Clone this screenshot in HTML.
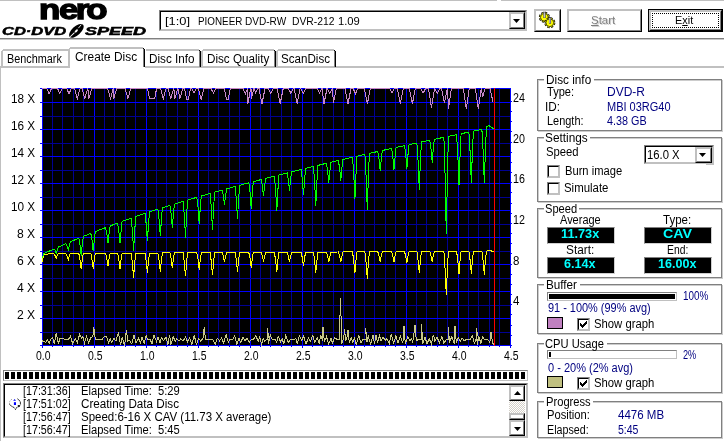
<!DOCTYPE html>
<html lang="en">
<head>
<meta charset="utf-8">
<title>Nero CD-DVD Speed</title>
<style>
html,body{margin:0;padding:0;background:#fff;}
body{width:724px;height:441px;overflow:hidden;font-family:"Liberation Sans",sans-serif;font-size:12px;color:#000;}
#app{position:relative;width:724px;height:441px;background:#fff;overflow:hidden;}
#app div,#app span,#app svg{position:absolute;box-sizing:border-box;}
.t{white-space:pre;transform-origin:0 0;}
.t u{text-decoration:underline;text-decoration-thickness:1px;text-underline-offset:1px;}
.hl{background:#c0c0c0;}
.sh{background:#808080;}
.bk{background:#000;}
.grp{border:1px solid #808080;}
.grph{border:1px solid #cccccc;}
.sunk{border:1px solid;border-color:#808080 #c0c0c0 #c0c0c0 #808080;background:#fff;}
.sunk2{border:1px solid;border-color:#808080 #c0c0c0 #c0c0c0 #808080;background:#fff;}
.sunk2>i{position:absolute;left:0;top:0;right:0;bottom:0;border:1px solid;border-color:#000 #c0c0c0 #c0c0c0 #000;}
.btn{border:1px solid;border-color:#c0c0c0 #000 #000 #c0c0c0;background:#fff;}
.btn>i{position:absolute;left:0;top:0;right:0;bottom:0;border:1px solid;border-color:#c0c0c0 #808080 #808080 #c0c0c0;}
.lcd{background:#000;border:1px solid;border-color:#808080 #d0d0d0 #d0d0d0 #808080;}
.chk{width:13px;height:13px;border:1px solid;border-color:#808080 #c0c0c0 #c0c0c0 #808080;background:#fff;}
.chk>i{position:absolute;left:0;top:0;right:0;bottom:0;border:1px solid;border-color:#000 #c0c0c0 #c0c0c0 #000;}
.sw{border:1px solid #000;}
.dis{text-shadow:1px 1px 0 #d4d4d4;}

</style>
</head>
<body>
<div id="app">
<div style="left:0px;top:0px;width:497px;height:1px;background:#c0c0c0;"></div>
<div style="left:501px;top:0px;width:223px;height:1px;background:#c0c0c0;"></div>
<div style="left:0px;top:38px;width:724px;height:1px;background:#808080;"></div>
<div style="left:0px;top:39px;width:724px;height:1px;background:#c8c8c8;"></div>
<svg style="left:66px;top:22px" width="20" height="17" viewBox="66 22 20 17"><g transform="translate(76.4 30.8) rotate(-42.5)"><ellipse cx="0" cy="0" rx="9" ry="4.4" fill="#000"/><ellipse cx="-0.2" cy="0" rx="2" ry="1" fill="#fff"/><path d="M-8.6 0.2 L-2.6 0" stroke="#fff" stroke-width="1"/><path d="M3.2 -0.6 L7.6 -1.2" stroke="#e8e8e8" stroke-width="0.9"/></g></svg>
<div class="sunk2" style="left:159px;top:10px;width:368px;height:21px;"><i></i></div>
<div class="btn" style="left:509px;top:12px;width:16px;height:17px;"><i></i></div>
<svg style="left:513px;top:19px" width="7" height="4" viewBox="0 0 7 4"><polygon points="0,0 7,0 3.5,4" fill="#000"/></svg>
<div class="btn" style="left:534px;top:9px;width:27px;height:23px;"><i></i></div>
<svg style="left:536px;top:10px" width="24" height="20" viewBox="536 10 24 20"><circle cx="544.4" cy="17.3" r="4.7" fill="none" stroke="#000" stroke-width="1.7" stroke-dasharray="2.3 1.39"/><circle cx="544.4" cy="17.3" r="3.9" fill="#ffff00" stroke="#303000" stroke-width="0.9"/><circle cx="544.4" cy="17.3" r="4.5" fill="none" stroke="#ffff00" stroke-width="0.9" stroke-dasharray="1.1 2.43" stroke-dashoffset="-0.6"/><circle cx="549.8" cy="22.7" r="4.7" fill="none" stroke="#000" stroke-width="1.7" stroke-dasharray="2.3 1.39"/><circle cx="549.8" cy="22.7" r="3.9" fill="#ffff00" stroke="#303000" stroke-width="0.9"/><circle cx="549.8" cy="22.7" r="4.5" fill="none" stroke="#ffff00" stroke-width="0.9" stroke-dasharray="1.1 2.43" stroke-dashoffset="-0.6"/><rect x="543.4" y="11.8" width="2.2" height="6.2" fill="#303030"/><rect x="543.85" y="12.4" width="1.3" height="5.2" fill="#a8a8b8"/><rect x="543.85" y="12.4" width="0.5" height="5.2" fill="#e8e8e8"/><rect x="548.9" y="17.4" width="2.2" height="6.2" fill="#303030"/><rect x="549.35" y="18.0" width="1.3" height="5.2" fill="#a8a8b8"/><rect x="549.35" y="18.0" width="0.5" height="5.2" fill="#e8e8e8"/></svg>
<div class="btn" style="left:567px;top:9px;width:75px;height:23px;"><i></i></div>
<div style="left:648px;top:9px;width:75px;height:23px;border:1px solid #000;background:#fff;"></div>
<div class="btn" style="left:649px;top:10px;width:73px;height:21px;border-color:#c0c0c0 #000 #000 #c0c0c0;"><i></i></div>
<div style="left:652px;top:13px;width:67px;height:15px;border:1px dotted #000;"></div>
<div class="hl" style="left:0px;top:66px;width:724px;height:2px;"></div>
<div class="hl" style="left:0px;top:66px;width:1px;height:375px;"></div>
<div class="hl" style="left:1px;top:51px;width:2px;height:15px;"></div><div class="hl" style="left:2px;top:50px;width:1px;height:1px;"></div><div class="hl" style="left:3px;top:49px;width:65px;height:2px;"></div><div class="bk" style="left:69px;top:51px;width:1px;height:16px;"></div><div class="sh" style="left:68px;top:51px;width:1px;height:16px;"></div><div class="bk" style="left:68px;top:50px;width:1px;height:1px;"></div>
<div class="hl" style="left:146px;top:49px;width:53px;height:2px;"></div><div class="bk" style="left:200px;top:51px;width:1px;height:16px;"></div><div class="sh" style="left:199px;top:51px;width:1px;height:16px;"></div><div class="bk" style="left:199px;top:50px;width:1px;height:1px;"></div>
<div class="hl" style="left:201px;top:51px;width:2px;height:15px;"></div><div class="hl" style="left:202px;top:50px;width:1px;height:1px;"></div><div class="hl" style="left:203px;top:49px;width:71px;height:2px;"></div><div class="bk" style="left:275px;top:51px;width:1px;height:16px;"></div><div class="sh" style="left:274px;top:51px;width:1px;height:16px;"></div><div class="bk" style="left:274px;top:50px;width:1px;height:1px;"></div>
<div class="hl" style="left:276px;top:51px;width:2px;height:15px;"></div><div class="hl" style="left:277px;top:50px;width:1px;height:1px;"></div><div class="hl" style="left:278px;top:49px;width:56px;height:2px;"></div><div class="bk" style="left:335px;top:51px;width:1px;height:16px;"></div><div class="sh" style="left:334px;top:51px;width:1px;height:16px;"></div><div class="bk" style="left:334px;top:50px;width:1px;height:1px;"></div>
<div style="left:68px;top:47px;width:77px;height:21px;background:#fff;"></div><div class="hl" style="left:68px;top:49px;width:2px;height:19px;"></div><div class="hl" style="left:69px;top:48px;width:1px;height:1px;"></div><div class="hl" style="left:70px;top:47px;width:73px;height:2px;"></div><div class="bk" style="left:144px;top:49px;width:1px;height:18px;"></div><div class="sh" style="left:143px;top:49px;width:1px;height:18px;"></div><div class="bk" style="left:143px;top:48px;width:1px;height:1px;"></div>
<div class="grph" style="left:538px;top:80px;width:185px;height:52px;"></div><div class="grp" style="left:537px;top:79px;width:185px;height:52px;"></div><div style="left:544px;top:77px;width:50px;height:5px;background:#fff;"></div>
<div class="grph" style="left:538px;top:138px;width:185px;height:65px;"></div><div class="grp" style="left:537px;top:137px;width:185px;height:65px;"></div><div style="left:544px;top:135px;width:46px;height:5px;background:#fff;"></div>
<div class="grph" style="left:538px;top:209px;width:185px;height:70px;"></div><div class="grp" style="left:537px;top:208px;width:185px;height:70px;"></div><div style="left:544px;top:206px;width:35px;height:5px;background:#fff;"></div>
<div class="grph" style="left:538px;top:285px;width:185px;height:50px;"></div><div class="grp" style="left:537px;top:284px;width:185px;height:50px;"></div><div style="left:544px;top:282px;width:36px;height:5px;background:#fff;"></div>
<div class="grph" style="left:538px;top:344px;width:185px;height:50px;"></div><div class="grp" style="left:537px;top:343px;width:185px;height:50px;"></div><div style="left:544px;top:341px;width:63px;height:5px;background:#fff;"></div>
<div class="grph" style="left:538px;top:402px;width:185px;height:37px;"></div><div class="grp" style="left:537px;top:401px;width:185px;height:37px;"></div><div style="left:544px;top:399px;width:49px;height:5px;background:#fff;"></div>
<div class="sunk2" style="left:644px;top:145px;width:70px;height:19px;"><i></i></div>
<div class="hl" style="left:706px;top:163px;width:8px;height:2px;"></div>
<div class="btn" style="left:695px;top:147px;width:17px;height:16px;"><i></i></div>
<svg style="left:699px;top:153px" width="7" height="4" viewBox="0 0 7 4"><polygon points="0,0 7,0 3.5,4" fill="#000"/></svg>
<div class="chk" style="left:547px;top:165px;width:13px;height:13px;"><i></i></div>
<div class="chk" style="left:547px;top:182px;width:13px;height:13px;"><i></i></div>
<div class="lcd" style="left:547px;top:227px;width:68px;height:17px;"></div>
<div class="lcd" style="left:644px;top:227px;width:68px;height:17px;"></div>
<div class="lcd" style="left:547px;top:257px;width:68px;height:17px;"></div>
<div class="lcd" style="left:644px;top:257px;width:68px;height:17px;"></div>
<div class="sunk" style="left:547px;top:292px;width:130px;height:9px;"><div class="bk" style="left:1px;top:1px;width:126px;height:5px;"></div></div>
<div class="sw" style="left:547px;top:317px;width:16px;height:12px;background:#c080c0;"></div>
<div class="chk" style="left:577px;top:318px;width:13px;height:13px;"><i></i></div>
<svg style="left:577px;top:318px" width="13" height="13" viewBox="0 0 13 13" shape-rendering="crispEdges" fill="#000"><rect x="9" y="3" width="1" height="1"/><rect x="8" y="4" width="2" height="1"/><rect x="3" y="5" width="1" height="1"/><rect x="7" y="5" width="3" height="1"/><rect x="3" y="6" width="2" height="1"/><rect x="6" y="6" width="3" height="1"/><rect x="3" y="7" width="5" height="1"/><rect x="4" y="8" width="3" height="1"/><rect x="5" y="9" width="1" height="1"/></svg>
<div class="sunk" style="left:547px;top:350px;width:130px;height:9px;"><div class="bk" style="left:1px;top:1px;width:2px;height:5px;"></div></div>
<div class="sw" style="left:547px;top:376px;width:16px;height:12px;background:#c0c080;"></div>
<div class="chk" style="left:577px;top:377px;width:13px;height:13px;"><i></i></div>
<svg style="left:577px;top:377px" width="13" height="13" viewBox="0 0 13 13" shape-rendering="crispEdges" fill="#000"><rect x="9" y="3" width="1" height="1"/><rect x="8" y="4" width="2" height="1"/><rect x="3" y="5" width="1" height="1"/><rect x="7" y="5" width="3" height="1"/><rect x="3" y="6" width="2" height="1"/><rect x="6" y="6" width="3" height="1"/><rect x="3" y="7" width="5" height="1"/><rect x="4" y="8" width="3" height="1"/><rect x="5" y="9" width="1" height="1"/></svg>
<div class="sunk" style="left:3px;top:370px;width:525px;height:11px;overflow:hidden;"><div class="bk" style="left:1px;top:1px;width:4px;height:7px;"></div><div class="bk" style="left:7px;top:1px;width:4px;height:7px;"></div><div class="bk" style="left:13px;top:1px;width:4px;height:7px;"></div><div class="bk" style="left:19px;top:1px;width:4px;height:7px;"></div><div class="bk" style="left:25px;top:1px;width:4px;height:7px;"></div><div class="bk" style="left:31px;top:1px;width:4px;height:7px;"></div><div class="bk" style="left:37px;top:1px;width:4px;height:7px;"></div><div class="bk" style="left:43px;top:1px;width:4px;height:7px;"></div><div class="bk" style="left:49px;top:1px;width:4px;height:7px;"></div><div class="bk" style="left:55px;top:1px;width:4px;height:7px;"></div><div class="bk" style="left:61px;top:1px;width:4px;height:7px;"></div><div class="bk" style="left:67px;top:1px;width:4px;height:7px;"></div><div class="bk" style="left:73px;top:1px;width:4px;height:7px;"></div><div class="bk" style="left:79px;top:1px;width:4px;height:7px;"></div><div class="bk" style="left:85px;top:1px;width:4px;height:7px;"></div><div class="bk" style="left:91px;top:1px;width:4px;height:7px;"></div><div class="bk" style="left:97px;top:1px;width:4px;height:7px;"></div><div class="bk" style="left:103px;top:1px;width:4px;height:7px;"></div><div class="bk" style="left:109px;top:1px;width:4px;height:7px;"></div><div class="bk" style="left:115px;top:1px;width:4px;height:7px;"></div><div class="bk" style="left:121px;top:1px;width:4px;height:7px;"></div><div class="bk" style="left:127px;top:1px;width:4px;height:7px;"></div><div class="bk" style="left:133px;top:1px;width:4px;height:7px;"></div><div class="bk" style="left:139px;top:1px;width:4px;height:7px;"></div><div class="bk" style="left:145px;top:1px;width:4px;height:7px;"></div><div class="bk" style="left:151px;top:1px;width:4px;height:7px;"></div><div class="bk" style="left:157px;top:1px;width:4px;height:7px;"></div><div class="bk" style="left:163px;top:1px;width:4px;height:7px;"></div><div class="bk" style="left:169px;top:1px;width:4px;height:7px;"></div><div class="bk" style="left:175px;top:1px;width:4px;height:7px;"></div><div class="bk" style="left:181px;top:1px;width:4px;height:7px;"></div><div class="bk" style="left:187px;top:1px;width:4px;height:7px;"></div><div class="bk" style="left:193px;top:1px;width:4px;height:7px;"></div><div class="bk" style="left:199px;top:1px;width:4px;height:7px;"></div><div class="bk" style="left:205px;top:1px;width:4px;height:7px;"></div><div class="bk" style="left:211px;top:1px;width:4px;height:7px;"></div><div class="bk" style="left:217px;top:1px;width:4px;height:7px;"></div><div class="bk" style="left:223px;top:1px;width:4px;height:7px;"></div><div class="bk" style="left:229px;top:1px;width:4px;height:7px;"></div><div class="bk" style="left:235px;top:1px;width:4px;height:7px;"></div><div class="bk" style="left:241px;top:1px;width:4px;height:7px;"></div><div class="bk" style="left:247px;top:1px;width:4px;height:7px;"></div><div class="bk" style="left:253px;top:1px;width:4px;height:7px;"></div><div class="bk" style="left:259px;top:1px;width:4px;height:7px;"></div><div class="bk" style="left:265px;top:1px;width:4px;height:7px;"></div><div class="bk" style="left:271px;top:1px;width:4px;height:7px;"></div><div class="bk" style="left:277px;top:1px;width:4px;height:7px;"></div><div class="bk" style="left:283px;top:1px;width:4px;height:7px;"></div><div class="bk" style="left:289px;top:1px;width:4px;height:7px;"></div><div class="bk" style="left:295px;top:1px;width:4px;height:7px;"></div><div class="bk" style="left:301px;top:1px;width:4px;height:7px;"></div><div class="bk" style="left:307px;top:1px;width:4px;height:7px;"></div><div class="bk" style="left:313px;top:1px;width:4px;height:7px;"></div><div class="bk" style="left:319px;top:1px;width:4px;height:7px;"></div><div class="bk" style="left:325px;top:1px;width:4px;height:7px;"></div><div class="bk" style="left:331px;top:1px;width:4px;height:7px;"></div><div class="bk" style="left:337px;top:1px;width:4px;height:7px;"></div><div class="bk" style="left:343px;top:1px;width:4px;height:7px;"></div><div class="bk" style="left:349px;top:1px;width:4px;height:7px;"></div><div class="bk" style="left:355px;top:1px;width:4px;height:7px;"></div><div class="bk" style="left:361px;top:1px;width:4px;height:7px;"></div><div class="bk" style="left:367px;top:1px;width:4px;height:7px;"></div><div class="bk" style="left:373px;top:1px;width:4px;height:7px;"></div><div class="bk" style="left:379px;top:1px;width:4px;height:7px;"></div><div class="bk" style="left:385px;top:1px;width:4px;height:7px;"></div><div class="bk" style="left:391px;top:1px;width:4px;height:7px;"></div><div class="bk" style="left:397px;top:1px;width:4px;height:7px;"></div><div class="bk" style="left:403px;top:1px;width:4px;height:7px;"></div><div class="bk" style="left:409px;top:1px;width:4px;height:7px;"></div><div class="bk" style="left:415px;top:1px;width:4px;height:7px;"></div><div class="bk" style="left:421px;top:1px;width:4px;height:7px;"></div><div class="bk" style="left:427px;top:1px;width:4px;height:7px;"></div><div class="bk" style="left:433px;top:1px;width:4px;height:7px;"></div><div class="bk" style="left:439px;top:1px;width:4px;height:7px;"></div><div class="bk" style="left:445px;top:1px;width:4px;height:7px;"></div><div class="bk" style="left:451px;top:1px;width:4px;height:7px;"></div><div class="bk" style="left:457px;top:1px;width:4px;height:7px;"></div><div class="bk" style="left:463px;top:1px;width:4px;height:7px;"></div><div class="bk" style="left:469px;top:1px;width:4px;height:7px;"></div><div class="bk" style="left:475px;top:1px;width:4px;height:7px;"></div><div class="bk" style="left:481px;top:1px;width:4px;height:7px;"></div><div class="bk" style="left:487px;top:1px;width:4px;height:7px;"></div><div class="bk" style="left:493px;top:1px;width:4px;height:7px;"></div><div class="bk" style="left:499px;top:1px;width:4px;height:7px;"></div><div class="bk" style="left:505px;top:1px;width:4px;height:7px;"></div><div class="bk" style="left:511px;top:1px;width:4px;height:7px;"></div><div class="bk" style="left:517px;top:1px;width:4px;height:7px;"></div></div>
<div class="sunk2" style="left:3px;top:383px;width:525px;height:55px;"><i></i></div>
<div style="left:509px;top:385px;width:16px;height:51px;background-color:#fff;background-image:linear-gradient(45deg,#d4d0c8 25%,transparent 25%,transparent 75%,#d4d0c8 75%),linear-gradient(45deg,#d4d0c8 25%,transparent 25%,transparent 75%,#d4d0c8 75%);background-size:2px 2px;background-position:0 0,1px 1px;"></div>
<div class="btn" style="left:509px;top:385px;width:16px;height:16px;"><i></i></div>
<svg style="left:514px;top:391px" width="7" height="4" viewBox="0 0 7 4"><polygon points="0,4 7,4 3.5,0" fill="#000"/></svg>
<div class="btn" style="left:509px;top:413px;width:16px;height:7px;"><i></i></div>
<div class="btn" style="left:509px;top:420px;width:16px;height:16px;"><i></i></div>
<svg style="left:514px;top:427px" width="7" height="4" viewBox="0 0 7 4"><polygon points="0,0 7,0 3.5,4" fill="#000"/></svg>
<svg style="left:8px;top:397px" width="14" height="14" viewBox="8 397 14 14"><path d="M9.5 404.5 L12 406.5 L14 407.5 L15.5 409.6 L16.6 407.6 L18.5 406.8 L20.4 404.8 L20.4 402 L19.2 400.2 L17.2 398.6" fill="none" stroke="#000" stroke-width="1" stroke-dasharray="1.6 0.7"/><path d="M9.5 403.8 L9.6 401.6 L11 399.8 L12.8 398.7" fill="none" stroke="#909090" stroke-width="1" stroke-dasharray="1 1.2"/><path d="M17.8 405 L19.8 405 L19.8 407 L17.8 407 Z" fill="#202020"/><path d="M13.2 400.8 L14.6 399 L16 400.8 Z" fill="#0000ff"/><rect x="13.9" y="402.2" width="2.1" height="2.8" fill="#0000ff"/></svg>
<svg style="left:0;top:0" width="724" height="441" viewBox="0 0 724 441" shape-rendering="crispEdges">
<rect x="42" y="88" width="469" height="258" fill="#000"/>
<rect x="42" y="88" width="1" height="258" fill="#0000ff"/>
<rect x="42" y="346" width="1" height="2" fill="#0000ff"/>
<rect x="52" y="88" width="1" height="258" fill="#000094"/>
<rect x="52" y="346" width="1" height="1" fill="#0000ff"/>
<rect x="62" y="88" width="1" height="258" fill="#000094"/>
<rect x="62" y="346" width="1" height="1" fill="#0000ff"/>
<rect x="73" y="88" width="1" height="258" fill="#000094"/>
<rect x="73" y="346" width="1" height="1" fill="#0000ff"/>
<rect x="83" y="88" width="1" height="258" fill="#000094"/>
<rect x="83" y="346" width="1" height="1" fill="#0000ff"/>
<rect x="94" y="88" width="1" height="258" fill="#0000ff"/>
<rect x="94" y="346" width="1" height="2" fill="#0000ff"/>
<rect x="104" y="88" width="1" height="258" fill="#000094"/>
<rect x="104" y="346" width="1" height="1" fill="#0000ff"/>
<rect x="114" y="88" width="1" height="258" fill="#000094"/>
<rect x="114" y="346" width="1" height="1" fill="#0000ff"/>
<rect x="125" y="88" width="1" height="258" fill="#000094"/>
<rect x="125" y="346" width="1" height="1" fill="#0000ff"/>
<rect x="135" y="88" width="1" height="258" fill="#000094"/>
<rect x="135" y="346" width="1" height="1" fill="#0000ff"/>
<rect x="146" y="88" width="1" height="258" fill="#0000ff"/>
<rect x="146" y="346" width="1" height="2" fill="#0000ff"/>
<rect x="156" y="88" width="1" height="258" fill="#000094"/>
<rect x="156" y="346" width="1" height="1" fill="#0000ff"/>
<rect x="166" y="88" width="1" height="258" fill="#000094"/>
<rect x="166" y="346" width="1" height="1" fill="#0000ff"/>
<rect x="177" y="88" width="1" height="258" fill="#000094"/>
<rect x="177" y="346" width="1" height="1" fill="#0000ff"/>
<rect x="187" y="88" width="1" height="258" fill="#000094"/>
<rect x="187" y="346" width="1" height="1" fill="#0000ff"/>
<rect x="198" y="88" width="1" height="258" fill="#0000ff"/>
<rect x="198" y="346" width="1" height="2" fill="#0000ff"/>
<rect x="208" y="88" width="1" height="258" fill="#000094"/>
<rect x="208" y="346" width="1" height="1" fill="#0000ff"/>
<rect x="218" y="88" width="1" height="258" fill="#000094"/>
<rect x="218" y="346" width="1" height="1" fill="#0000ff"/>
<rect x="229" y="88" width="1" height="258" fill="#000094"/>
<rect x="229" y="346" width="1" height="1" fill="#0000ff"/>
<rect x="239" y="88" width="1" height="258" fill="#000094"/>
<rect x="239" y="346" width="1" height="1" fill="#0000ff"/>
<rect x="250" y="88" width="1" height="258" fill="#0000ff"/>
<rect x="250" y="346" width="1" height="2" fill="#0000ff"/>
<rect x="260" y="88" width="1" height="258" fill="#000094"/>
<rect x="260" y="346" width="1" height="1" fill="#0000ff"/>
<rect x="270" y="88" width="1" height="258" fill="#000094"/>
<rect x="270" y="346" width="1" height="1" fill="#0000ff"/>
<rect x="281" y="88" width="1" height="258" fill="#000094"/>
<rect x="281" y="346" width="1" height="1" fill="#0000ff"/>
<rect x="291" y="88" width="1" height="258" fill="#000094"/>
<rect x="291" y="346" width="1" height="1" fill="#0000ff"/>
<rect x="302" y="88" width="1" height="258" fill="#0000ff"/>
<rect x="302" y="346" width="1" height="2" fill="#0000ff"/>
<rect x="312" y="88" width="1" height="258" fill="#000094"/>
<rect x="312" y="346" width="1" height="1" fill="#0000ff"/>
<rect x="322" y="88" width="1" height="258" fill="#000094"/>
<rect x="322" y="346" width="1" height="1" fill="#0000ff"/>
<rect x="333" y="88" width="1" height="258" fill="#000094"/>
<rect x="333" y="346" width="1" height="1" fill="#0000ff"/>
<rect x="343" y="88" width="1" height="258" fill="#000094"/>
<rect x="343" y="346" width="1" height="1" fill="#0000ff"/>
<rect x="354" y="88" width="1" height="258" fill="#0000ff"/>
<rect x="354" y="346" width="1" height="2" fill="#0000ff"/>
<rect x="364" y="88" width="1" height="258" fill="#000094"/>
<rect x="364" y="346" width="1" height="1" fill="#0000ff"/>
<rect x="374" y="88" width="1" height="258" fill="#000094"/>
<rect x="374" y="346" width="1" height="1" fill="#0000ff"/>
<rect x="385" y="88" width="1" height="258" fill="#000094"/>
<rect x="385" y="346" width="1" height="1" fill="#0000ff"/>
<rect x="395" y="88" width="1" height="258" fill="#000094"/>
<rect x="395" y="346" width="1" height="1" fill="#0000ff"/>
<rect x="406" y="88" width="1" height="258" fill="#0000ff"/>
<rect x="406" y="346" width="1" height="2" fill="#0000ff"/>
<rect x="416" y="88" width="1" height="258" fill="#000094"/>
<rect x="416" y="346" width="1" height="1" fill="#0000ff"/>
<rect x="426" y="88" width="1" height="258" fill="#000094"/>
<rect x="426" y="346" width="1" height="1" fill="#0000ff"/>
<rect x="437" y="88" width="1" height="258" fill="#000094"/>
<rect x="437" y="346" width="1" height="1" fill="#0000ff"/>
<rect x="447" y="88" width="1" height="258" fill="#000094"/>
<rect x="447" y="346" width="1" height="1" fill="#0000ff"/>
<rect x="458" y="88" width="1" height="258" fill="#0000ff"/>
<rect x="458" y="346" width="1" height="2" fill="#0000ff"/>
<rect x="468" y="88" width="1" height="258" fill="#000094"/>
<rect x="468" y="346" width="1" height="1" fill="#0000ff"/>
<rect x="478" y="88" width="1" height="258" fill="#000094"/>
<rect x="478" y="346" width="1" height="1" fill="#0000ff"/>
<rect x="489" y="88" width="1" height="258" fill="#000094"/>
<rect x="489" y="346" width="1" height="1" fill="#0000ff"/>
<rect x="499" y="88" width="1" height="258" fill="#000094"/>
<rect x="499" y="346" width="1" height="1" fill="#0000ff"/>
<rect x="510" y="88" width="1" height="258" fill="#0000ff"/>
<rect x="510" y="346" width="1" height="2" fill="#0000ff"/>
<rect x="42" y="345" width="469" height="1" fill="#0000ff"/>
<rect x="40" y="345" width="2" height="1" fill="#0000ff"/>
<rect x="42" y="332" width="469" height="1" fill="#000094"/>
<rect x="40" y="332" width="2" height="1" fill="#0000ff"/>
<rect x="42" y="318" width="469" height="1" fill="#0000ff"/>
<rect x="40" y="318" width="2" height="1" fill="#0000ff"/>
<rect x="42" y="305" width="469" height="1" fill="#000094"/>
<rect x="40" y="305" width="2" height="1" fill="#0000ff"/>
<rect x="42" y="291" width="469" height="1" fill="#0000ff"/>
<rect x="40" y="291" width="2" height="1" fill="#0000ff"/>
<rect x="42" y="278" width="469" height="1" fill="#000094"/>
<rect x="40" y="278" width="2" height="1" fill="#0000ff"/>
<rect x="42" y="264" width="469" height="1" fill="#0000ff"/>
<rect x="40" y="264" width="2" height="1" fill="#0000ff"/>
<rect x="42" y="251" width="469" height="1" fill="#000094"/>
<rect x="40" y="251" width="2" height="1" fill="#0000ff"/>
<rect x="42" y="237" width="469" height="1" fill="#0000ff"/>
<rect x="40" y="237" width="2" height="1" fill="#0000ff"/>
<rect x="42" y="224" width="469" height="1" fill="#000094"/>
<rect x="40" y="224" width="2" height="1" fill="#0000ff"/>
<rect x="42" y="210" width="469" height="1" fill="#0000ff"/>
<rect x="40" y="210" width="2" height="1" fill="#0000ff"/>
<rect x="42" y="197" width="469" height="1" fill="#000094"/>
<rect x="40" y="197" width="2" height="1" fill="#0000ff"/>
<rect x="42" y="183" width="469" height="1" fill="#0000ff"/>
<rect x="40" y="183" width="2" height="1" fill="#0000ff"/>
<rect x="42" y="170" width="469" height="1" fill="#000094"/>
<rect x="40" y="170" width="2" height="1" fill="#0000ff"/>
<rect x="42" y="156" width="469" height="1" fill="#0000ff"/>
<rect x="40" y="156" width="2" height="1" fill="#0000ff"/>
<rect x="42" y="143" width="469" height="1" fill="#000094"/>
<rect x="40" y="143" width="2" height="1" fill="#0000ff"/>
<rect x="42" y="129" width="469" height="1" fill="#0000ff"/>
<rect x="40" y="129" width="2" height="1" fill="#0000ff"/>
<rect x="42" y="116" width="469" height="1" fill="#000094"/>
<rect x="40" y="116" width="2" height="1" fill="#0000ff"/>
<rect x="42" y="102" width="469" height="1" fill="#0000ff"/>
<rect x="40" y="102" width="2" height="1" fill="#0000ff"/>
<rect x="40" y="88" width="2" height="1" fill="#0000ff"/>
<rect x="511" y="345" width="1" height="1" fill="#0000ff"/>
<rect x="511" y="335" width="1" height="1" fill="#0000ff"/>
<rect x="511" y="325" width="1" height="1" fill="#0000ff"/>
<rect x="511" y="314" width="1" height="1" fill="#0000ff"/>
<rect x="511" y="304" width="1" height="1" fill="#0000ff"/>
<rect x="511" y="294" width="1" height="1" fill="#0000ff"/>
<rect x="511" y="284" width="1" height="1" fill="#0000ff"/>
<rect x="511" y="274" width="1" height="1" fill="#0000ff"/>
<rect x="511" y="264" width="1" height="1" fill="#0000ff"/>
<rect x="511" y="253" width="1" height="1" fill="#0000ff"/>
<rect x="511" y="243" width="1" height="1" fill="#0000ff"/>
<rect x="511" y="233" width="1" height="1" fill="#0000ff"/>
<rect x="511" y="223" width="1" height="1" fill="#0000ff"/>
<rect x="511" y="213" width="1" height="1" fill="#0000ff"/>
<rect x="511" y="203" width="1" height="1" fill="#0000ff"/>
<rect x="511" y="192" width="1" height="1" fill="#0000ff"/>
<rect x="511" y="182" width="1" height="1" fill="#0000ff"/>
<rect x="511" y="172" width="1" height="1" fill="#0000ff"/>
<rect x="511" y="162" width="1" height="1" fill="#0000ff"/>
<rect x="511" y="152" width="1" height="1" fill="#0000ff"/>
<rect x="511" y="142" width="1" height="1" fill="#0000ff"/>
<rect x="511" y="131" width="1" height="1" fill="#0000ff"/>
<rect x="511" y="121" width="1" height="1" fill="#0000ff"/>
<rect x="511" y="111" width="1" height="1" fill="#0000ff"/>
<rect x="511" y="101" width="1" height="1" fill="#0000ff"/>
<rect x="42" y="88" width="1" height="258" fill="#0000ff"/>
<rect x="510" y="88" width="1" height="258" fill="#0000ff"/>
<rect x="42" y="345" width="469" height="1" fill="#0000ff"/>
<rect x="42" y="88" width="469" height="1" fill="#0000ff"/>
<polyline points="42.0,88.5 46.7,88.5 49.1,93.6 51.5,88.5 57.5,88.5 59.9,93.6 62.3,88.5 66.6,88.5 69.0,93.6 71.4,88.5 74.5,88.5 77.3,98.6 80.1,88.5 82.0,88.5 84.8,98.6 87.6,88.5 87.8,88.5 88.9,98.6 91.7,88.5 107.7,88.5 110.5,98.6 113.3,88.5 113.5,88.5 113.8,98.6 116.6,88.5 125.1,88.5 127.9,98.6 130.7,88.5 147.6,88.5 149.6,98.8 154.6,98.8 156.6,88.5 160.5,88.5 163.3,98.6 166.1,88.5 168.0,88.5 170.8,98.6 173.6,88.5 173.8,88.5 174.9,98.6 177.7,88.5 177.9,88.5 179.9,98.6 182.7,88.5 184.6,88.5 186.6,99.4 188.4,99.4 190.4,88.5 191.6,88.5 194.0,93.0 196.4,88.5 198.3,88.5 201.1,99.4 203.9,88.5 211.0,88.5 213.4,93.0 215.8,88.5 224.4,88.5 226.4,99.4 228.2,99.4 230.2,88.5 243.0,88.5 245.4,93.6 247.8,88.5 248.0,88.5 247.8,103.6 250.8,88.5 251.0,88.5 251.2,99.4 254.0,88.5 254.2,88.5 255.6,93.0 258.0,88.5 259.0,88.5 262.0,103.6 265.0,88.5 268.4,88.5 270.8,93.6 273.2,88.5 277.2,88.5 280.2,103.6 283.2,88.5 288.4,88.5 290.8,93.0 293.2,88.5 294.1,88.5 297.1,103.6 300.1,88.5 300.8,88.5 303.2,93.6 305.6,88.5 317.1,88.5 319.5,93.0 321.9,88.5 322.1,88.5 324.0,103.6 327.0,88.5 327.4,88.5 329.8,93.6 332.2,88.5 332.4,88.5 333.4,102.7 336.4,88.5 345.0,88.5 348.0,103.6 351.0,88.5 353.1,88.5 355.5,93.6 357.9,88.5 364.4,88.5 367.4,103.6 370.4,88.5 389.6,88.5 392.0,93.0 394.4,88.5 397.3,88.5 400.3,103.6 403.3,88.5 409.4,88.5 412.4,103.6 415.4,88.5 420.8,88.5 423.2,93.0 425.6,88.5 428.5,88.5 431.5,107.7 434.5,88.5 434.9,88.5 437.3,93.6 439.7,88.5 441.4,88.5 444.4,102.7 447.4,88.5 447.6,88.5 448.4,108.5 451.4,88.5 463.3,88.5 466.3,108.5 469.3,88.5 475.3,88.5 478.3,108.5 481.3,88.5 481.5,88.5 482.5,97.0 485.3,88.5 490.0,88.5 493.0,102.0" fill="none" stroke="#c888c8" stroke-width="1" shape-rendering="crispEdges" stroke-linejoin="miter"/>
<polyline points="42.5,340.0 42.5,341.1 45.6,342.4 47.5,339.9 49.3,343.0 51.2,338.7 52.4,337.4 54.3,343.6 56.2,333.1 58.4,343.6 59.9,338.7 62.4,338.7 64.9,339.3 68.0,339.9 70.5,336.2 72.6,343.6 75.4,338.7 77.3,343.0 79.6,334.3 81.7,338.7 82.9,336.8 84.5,343.0 86.6,336.2 88.5,343.0 91.0,337.4 92.9,336.8 93.7,326.8 95.3,339.3 99.7,339.9 102.2,339.3 104.7,336.2 106.5,336.8 108.7,343.0 110.3,338.7 111.5,342.4 114.0,338.0 115.9,341.1 118.4,332.4 120.6,344.9 122.1,337.4 124.6,345.5 126.4,330.0 127.7,341.1 129.6,340.5 131.8,344.0 134.0,335.2 136.0,342.6 138.5,338.4 140.5,342.7 142.0,337.1 144.2,343.0 146.2,335.3 147.7,339.5 150.0,339.3 152.0,343.7 154.0,335.3 156.5,341.6 158.0,336.9 160.0,342.7 161.5,337.5 163.5,340.5 166.0,337.1 168.0,344.4 169.5,334.9 171.0,344.5 173.2,336.4 175.2,341.5 176.7,338.7 178.9,340.9 180.9,338.8 183.1,341.1 185.6,336.7 187.6,342.0 189.8,337.9 191.8,344.5 194.3,335.1 196.3,344.6 198.8,338.4 200.8,341.5 203.3,337.6 204.2,327.0 205.5,339.5 207.9,339.3 209.9,339.5 212.7,339.3 215.2,344.4 217.4,338.2 219.6,341.0 221.6,337.8 223.6,343.0 226.1,334.8 228.3,342.2 229.8,339.5 232.8,339.3 234.8,335.8 236.8,344.2 239.0,338.1 240.5,342.4 243.0,337.6 245.0,340.7 247.2,338.5 249.2,342.6 251.2,339.5 253.5,339.3 255.7,336.0 258.2,341.0 259.7,336.8 261.7,344.4 263.2,338.5 264.7,341.7 266.2,339.5 269.2,339.3 267.0,328.0 268.3,343.5 270.3,335.0 272.3,339.5 275.2,339.3 276.7,342.2 278.2,336.4 280.7,342.0 282.2,338.5 283.7,344.1 285.7,335.7 288.2,342.3 290.7,339.5 294.2,339.3 295.7,338.4 297.2,343.3 299.4,336.0 301.6,340.4 303.6,336.2 306.1,344.2 308.3,337.8 310.5,341.2 312.7,335.6 314.7,342.0 317.2,337.9 319.2,343.9 320.7,334.8 322.7,340.9 323.0,327.0 324.3,341.3 326.5,336.6 328.5,343.9 331.0,338.5 332.5,343.0 334.5,337.5 337.0,339.5 339.3,339.3 340.5,298.0 341.8,343.6 343.8,338.2 344.5,329.0 345.8,340.9 347.3,336.0 348.0,330.0 349.3,343.3 351.3,337.7 352.8,342.6 354.3,337.7 356.3,344.4 358.8,335.6 361.0,343.3 363.0,339.5 366.9,339.3 365.5,328.0 366.8,342.3 368.3,336.4 370.8,344.4 373.0,334.7 374.5,343.8 376.0,335.0 377.5,342.7 379.5,335.8 381.0,340.7 383.2,337.0 385.2,340.5 386.7,338.7 389.2,343.7 391.2,334.6 393.7,343.3 395.9,335.9 397.9,342.7 400.4,336.6 402.9,343.2 404.0,326.0 405.3,344.0 407.8,336.4 409.8,340.9 411.3,338.7 412.8,342.1 415.0,325.0 416.3,340.8 418.3,339.5 421.4,339.3 421.5,324.0 422.8,343.8 425.0,336.8 427.0,344.2 429.2,338.3 431.4,344.3 433.4,334.7 434.9,341.4 436.9,337.3 439.4,342.5 441.9,336.7 443.9,343.3 446.1,339.5 449.4,339.3 448.0,327.0 449.3,342.7 451.8,336.6 454.3,344.0 455.0,326.0 456.3,343.0 458.3,337.5 460.3,341.2 462.3,338.2 464.3,340.8 466.5,339.5 470.2,339.3 472.4,335.8 474.4,343.3 475.9,339.5 479.0,339.3 476.0,328.0 477.3,344.5 478.8,336.1 480.8,343.3 482.8,336.8 484.3,339.5 487.4,339.3 489.9,342.4 491.0,332.0 492.3,341.3 493.5,345.0" fill="none" stroke="#c8c888" stroke-width="1" shape-rendering="crispEdges" stroke-linejoin="miter"/>
<polyline points="42.5,262.0 43.5,254.4 53.8,253.5 55.0,255.4 56.2,258.2 57.2,255.6 58.3,253.5 65.8,253.5 67.0,256.1 68.2,260.0 69.2,256.4 70.3,253.4 78.8,253.4 80.0,259.6 81.2,268.9 82.2,260.4 83.3,253.4 90.8,253.3 92.0,259.5 93.2,268.7 94.2,260.2 95.3,253.3 105.6,253.3 106.8,258.4 108.0,266.1 109.0,259.0 110.1,253.2 117.6,253.2 118.8,259.5 120.0,268.9 121.0,260.3 122.1,253.2 131.2,253.1 132.4,262.9 133.6,277.5 134.6,264.1 135.7,253.1 145.0,253.1 146.2,261.0 147.4,272.9 148.4,262.0 149.5,253.0 157.9,253.0 159.1,260.5 160.3,271.7 161.3,261.4 162.4,253.0 169.9,252.9 171.1,258.9 172.3,267.9 173.3,259.6 174.4,252.9 183.1,252.8 184.3,262.2 185.5,276.3 186.5,263.4 187.6,252.8 196.8,252.8 198.1,259.5 199.2,269.6 200.2,260.3 201.3,252.8 210.1,252.7 211.3,261.7 212.5,275.2 213.5,262.8 214.6,252.7 222.1,252.6 223.3,256.2 224.5,261.6 225.5,256.6 226.6,252.6 235.1,252.6 236.3,260.2 237.5,271.7 238.5,261.2 239.6,252.5 248.8,252.5 250.1,258.5 251.2,267.6 252.2,259.3 253.3,252.5 261.1,252.4 262.3,256.1 263.5,261.6 264.5,256.6 265.6,252.4 274.4,252.4 275.6,260.2 276.8,271.9 277.8,261.1 278.9,252.3 287.1,252.3 288.3,256.2 289.5,262.0 290.5,256.7 291.6,252.3 301.1,252.2 302.3,257.7 303.5,266.0 304.5,258.4 305.6,252.2 313.4,252.2 314.6,260.4 315.8,272.8 316.8,261.4 317.9,252.1 326.4,252.1 327.6,256.1 328.8,262.1 329.8,256.6 330.9,252.1 338.4,252.0 339.6,256.1 340.8,262.3 341.8,256.7 342.9,252.0 352.5,251.9 353.7,260.4 354.9,273.0 355.9,261.4 357.0,251.9 364.9,251.9 366.1,262.8 367.3,279.1 368.3,264.1 369.4,251.9 377.8,251.8 379.0,255.7 380.2,261.6 381.2,256.2 382.3,251.8 391.6,251.7 392.8,255.8 394.0,262.0 395.0,256.3 396.1,251.7 404.5,251.7 405.7,256.0 406.9,262.6 407.9,256.6 409.0,251.6 416.9,251.6 418.1,260.3 419.3,273.3 420.3,261.4 421.4,251.6 429.8,251.5 431.0,255.7 432.2,261.9 433.2,256.2 434.3,251.5 443.9,251.5 445.1,269.0 446.3,295.3 447.3,271.2 448.4,251.4 456.6,251.4 457.8,260.5 459.0,274.1 460.0,261.6 461.1,251.4 468.9,251.3 470.1,260.2 471.3,273.6 472.3,261.4 473.4,251.3 481.9,251.3 483.1,260.5 484.3,274.5 485.3,261.7 486.4,251.2 488.0,250.8 491.0,250.8 494.0,252.0" fill="none" stroke="#ffff00" stroke-width="1" shape-rendering="crispEdges" stroke-linejoin="miter"/>
<polyline points="42.5,258.0 43.5,253.6 53.8,249.1 55.0,250.0 56.2,253.0 57.2,250.3 58.3,247.1 65.8,243.8 67.0,245.6 68.2,250.0 69.2,246.0 70.3,241.8 78.8,238.2 80.0,244.5 81.2,255.5 82.2,245.5 83.3,236.4 90.8,233.3 92.0,239.9 93.2,251.2 94.2,240.9 95.3,231.6 105.6,227.6 106.8,233.3 108.0,243.2 109.0,234.1 110.1,225.9 117.6,223.1 118.8,230.6 120.0,243.2 121.0,231.7 122.1,221.4 131.2,218.2 132.4,230.9 133.6,251.2 134.6,232.6 135.7,216.6 145.0,213.4 146.2,224.1 147.4,241.2 148.4,225.5 149.5,211.9 157.9,209.2 159.1,219.6 160.3,236.2 161.3,221.0 162.4,207.8 169.9,205.5 171.1,213.8 172.3,227.5 173.3,215.0 174.4,204.1 183.1,201.4 184.3,215.4 185.5,237.5 186.5,217.3 187.6,200.1 196.8,197.3 198.1,207.5 199.2,223.8 200.2,208.8 201.3,196.0 210.1,193.5 211.3,207.7 212.5,230.0 213.5,209.6 214.6,192.2 222.1,190.1 223.3,195.5 224.5,204.5 225.5,196.2 226.6,188.9 235.1,186.5 236.3,199.0 237.5,218.8 238.5,200.7 239.6,185.3 248.8,182.8 250.1,192.8 251.2,208.8 252.2,194.1 253.3,181.6 261.1,179.6 262.3,185.6 263.5,195.5 264.5,186.4 265.6,178.4 274.4,176.2 275.6,189.8 276.8,211.2 277.8,191.6 278.9,175.0 287.1,172.9 288.3,179.6 289.5,190.5 290.5,180.5 291.6,171.8 301.1,169.4 302.3,179.3 303.5,195.0 304.5,180.6 305.6,168.3 313.4,166.5 314.6,181.8 315.8,205.8 316.8,183.8 317.9,165.4 326.4,163.3 327.6,170.7 328.8,182.5 329.8,171.6 330.9,162.3 338.4,160.5 339.6,168.2 340.8,180.5 341.8,169.2 342.9,159.5 352.5,157.2 353.7,173.8 354.9,199.4 355.9,175.9 357.0,156.2 364.9,154.4 366.1,176.2 367.3,209.8 368.3,179.0 369.4,153.4 377.8,151.5 379.0,159.1 380.2,171.3 381.2,160.1 382.3,150.5 391.6,148.4 392.8,156.6 394.0,169.6 395.0,157.7 396.1,147.5 404.5,145.6 405.7,154.5 406.9,168.5 407.9,155.6 409.0,144.7 416.9,143.0 418.1,161.3 419.3,189.6 420.3,163.7 421.4,142.0 429.8,140.2 431.0,148.9 432.2,162.6 433.2,150.0 434.3,139.3 443.9,137.3 445.1,175.8 446.3,234.3 447.3,180.7 448.4,136.3 456.6,134.6 457.8,154.7 459.0,185.4 460.0,157.2 461.1,133.7 468.9,132.1 470.1,152.0 471.3,182.5 472.3,154.5 473.4,131.2 481.9,129.5 483.1,150.4 484.3,182.5 485.3,153.1 486.4,128.6 487.0,126.5 489.0,125.5 491.0,127.0 494.0,129.0" fill="none" stroke="#00ff00" stroke-width="1" shape-rendering="crispEdges" stroke-linejoin="miter"/>
<rect x="494" y="88" width="1" height="258" fill="#ff0000"/>
</svg>
<span class="t nero" style="left:38.90px;top:-3px;font-size:27px;line-height:27px;transform:scaleX(1.2900);font-weight:bold;-webkit-text-stroke:1.3px #000;letter-spacing:-1px;">n<span style="position:static;letter-spacing:-2px">e</span><span style="position:static;letter-spacing:-2.4px">r</span>o</span>
<span class="t cds" style="left:1.90px;top:26px;font-size:11px;line-height:11px;transform:scaleX(1.4989);font-weight:bold;font-style:italic;-webkit-text-stroke:0.5px #000;">CD·DVD </span>
<span class="t cds" style="left:84.90px;top:26px;font-size:11px;line-height:11px;transform:scaleX(1.6387);font-weight:bold;font-style:italic;-webkit-text-stroke:0.5px #000;">SPEED</span>
<span class="t" style="left:165.00px;top:16px;font-size:11px;line-height:11px;transform:scaleX(1.1711);">[1:0]  </span>
<span class="t" style="left:198.00px;top:16px;font-size:11px;line-height:11px;transform:scaleX(0.8958);">PIONEER </span>
<span class="t" style="left:244.90px;top:16px;font-size:11px;line-height:11px;transform:scaleX(0.9138);">DVD-RW  </span>
<span class="t" style="left:292.20px;top:16px;font-size:11px;line-height:11px;transform:scaleX(0.9397);">DVR-212 </span>
<span class="t" style="left:337.90px;top:16px;font-size:11px;line-height:11px;transform:scaleX(1.0192);">1.09</span>
<span class="t dis" style="left:591.40px;top:15px;font-size:11px;line-height:11px;transform:scaleX(1.0443);color:#808080;"><u>S</u>tart</span>
<span class="t" style="left:675.30px;top:15px;font-size:11px;line-height:11px;transform:scaleX(0.9901);">E<u>x</u>it</span>
<span class="t" style="left:7.40px;top:53px;font-size:12px;line-height:12px;transform:scaleX(0.9029);">Benchmark</span>
<span class="t" style="left:75.00px;top:51px;font-size:12px;line-height:12px;transform:scaleX(0.9907);">Create Disc</span>
<span class="t" style="left:149.15px;top:53px;font-size:12px;line-height:12px;transform:scaleX(0.9754);">Disc Info</span>
<span class="t" style="left:207.30px;top:53px;font-size:12px;line-height:12px;transform:scaleX(0.9732);">Disc Quality</span>
<span class="t" style="left:281.00px;top:53px;font-size:12px;line-height:12px;transform:scaleX(0.9668);">ScanDisc</span>
<span class="t" style="left:11.40px;top:93px;font-size:12px;line-height:12px;transform:scaleX(0.9805);">18 X</span>
<span class="t" style="left:11.40px;top:120px;font-size:12px;line-height:12px;transform:scaleX(0.9805);">16 X</span>
<span class="t" style="left:11.40px;top:147px;font-size:12px;line-height:12px;transform:scaleX(0.9805);">14 X</span>
<span class="t" style="left:11.40px;top:174px;font-size:12px;line-height:12px;transform:scaleX(0.9805);">12 X</span>
<span class="t" style="left:11.40px;top:201px;font-size:12px;line-height:12px;transform:scaleX(0.9805);">10 X</span>
<span class="t" style="left:17.40px;top:228px;font-size:12px;line-height:12px;transform:scaleX(1.0107);">8 X</span>
<span class="t" style="left:17.40px;top:255px;font-size:12px;line-height:12px;transform:scaleX(1.0107);">6 X</span>
<span class="t" style="left:17.40px;top:282px;font-size:12px;line-height:12px;transform:scaleX(1.0107);">4 X</span>
<span class="t" style="left:17.40px;top:309px;font-size:12px;line-height:12px;transform:scaleX(1.0107);">2 X</span>
<span class="t" style="left:513.40px;top:92px;font-size:12px;line-height:12px;transform:scaleX(0.8922);">24</span>
<span class="t" style="left:513.40px;top:133px;font-size:12px;line-height:12px;transform:scaleX(0.8922);">20</span>
<span class="t" style="left:513.40px;top:173px;font-size:12px;line-height:12px;transform:scaleX(0.8922);">16</span>
<span class="t" style="left:513.40px;top:214px;font-size:12px;line-height:12px;transform:scaleX(0.8922);">12</span>
<span class="t" style="left:513.40px;top:255px;font-size:12px;line-height:12px;transform:scaleX(0.9571);">8</span>
<span class="t" style="left:513.40px;top:295px;font-size:12px;line-height:12px;transform:scaleX(0.9571);">4</span>
<span class="t" style="left:36.00px;top:350px;font-size:12px;line-height:12px;transform:scaleX(0.8702);">0.0</span>
<span class="t" style="left:88.00px;top:350px;font-size:12px;line-height:12px;transform:scaleX(0.8702);">0.5</span>
<span class="t" style="left:140.00px;top:350px;font-size:12px;line-height:12px;transform:scaleX(0.8702);">1.0</span>
<span class="t" style="left:192.00px;top:350px;font-size:12px;line-height:12px;transform:scaleX(0.8702);">1.5</span>
<span class="t" style="left:244.00px;top:350px;font-size:12px;line-height:12px;transform:scaleX(0.8702);">2.0</span>
<span class="t" style="left:296.00px;top:350px;font-size:12px;line-height:12px;transform:scaleX(0.8702);">2.5</span>
<span class="t" style="left:348.00px;top:350px;font-size:12px;line-height:12px;transform:scaleX(0.8702);">3.0</span>
<span class="t" style="left:400.00px;top:350px;font-size:12px;line-height:12px;transform:scaleX(0.8702);">3.5</span>
<span class="t" style="left:452.00px;top:350px;font-size:12px;line-height:12px;transform:scaleX(0.8702);">4.0</span>
<span class="t" style="left:504.00px;top:350px;font-size:12px;line-height:12px;transform:scaleX(0.8702);">4.5</span>
<span class="t" style="left:546.10px;top:74px;font-size:12px;line-height:12px;transform:scaleX(0.9819);">Disc info</span>
<span class="t" style="left:546.90px;top:86px;font-size:12px;line-height:12px;transform:scaleX(0.9202);">Type:</span>
<span class="t" style="left:545.42px;top:101px;font-size:12px;line-height:12px;transform:scaleX(0.9786);">ID:</span>
<span class="t" style="left:546.90px;top:115px;font-size:12px;line-height:12px;transform:scaleX(0.9118);">Length:</span>
<span class="t" style="left:607.00px;top:86px;font-size:12px;line-height:12px;transform:scaleX(0.9992);color:#000080;">DVD-R</span>
<span class="t" style="left:607.00px;top:101px;font-size:12px;line-height:12px;transform:scaleX(0.9169);color:#000080;">MBI 03RG40</span>
<span class="t" style="left:607.00px;top:115px;font-size:12px;line-height:12px;transform:scaleX(0.8995);color:#000080;">4.38 GB</span>
<span class="t" style="left:545.10px;top:132px;font-size:12px;line-height:12px;transform:scaleX(0.9848);">Settings</span>
<span class="t" style="left:546.10px;top:146px;font-size:12px;line-height:12px;transform:scaleX(0.9405);">Speed</span>
<span class="t" style="left:647.20px;top:149px;font-size:12px;line-height:12px;transform:scaleX(0.9398);">16.0 X</span>
<span class="t" style="left:565.20px;top:165px;font-size:12px;line-height:12px;transform:scaleX(0.9304);">Burn image</span>
<span class="t" style="left:564.10px;top:182px;font-size:12px;line-height:12px;transform:scaleX(0.9508);">Simulate</span>
<span class="t" style="left:545.10px;top:203px;font-size:12px;line-height:12px;transform:scaleX(0.9258);">Speed</span>
<span class="t" style="left:559.60px;top:214px;font-size:12px;line-height:12px;transform:scaleX(0.9151);">Average</span>
<span class="t" style="left:663.40px;top:214px;font-size:12px;line-height:12px;transform:scaleX(0.9581);">Type:</span>
<span class="t" style="left:561.20px;top:228px;font-size:12px;line-height:12px;transform:scaleX(1.0614);color:#00ffff;font-weight:bold;">11.73x</span>
<span class="t" style="left:663.00px;top:228px;font-size:12px;line-height:12px;transform:scaleX(1.1906);color:#00ffff;font-weight:bold;">CAV</span>
<span class="t" style="left:566.10px;top:244px;font-size:12px;line-height:12px;transform:scaleX(0.9844);">Start:</span>
<span class="t" style="left:666.90px;top:244px;font-size:12px;line-height:12px;transform:scaleX(0.8624);">End:</span>
<span class="t" style="left:563.90px;top:258px;font-size:12px;line-height:12px;transform:scaleX(1.0509);color:#00ffff;font-weight:bold;">6.14x</span>
<span class="t" style="left:658.00px;top:258px;font-size:12px;line-height:12px;transform:scaleX(1.0478);color:#00ffff;font-weight:bold;">16.00x</span>
<span class="t" style="left:546.40px;top:279px;font-size:12px;line-height:12px;transform:scaleX(0.9748);">Buffer</span>
<span class="t" style="left:683.10px;top:290px;font-size:12px;line-height:12px;transform:scaleX(0.8220);color:#000080;">100%</span>
<span class="t" style="left:547.90px;top:302px;font-size:12px;line-height:12px;transform:scaleX(0.9110);color:#000080;">91 - 100% (99% avg)</span>
<span class="t" style="left:594.20px;top:318px;font-size:12px;line-height:12px;transform:scaleX(0.9421);">Show graph</span>
<span class="t" style="left:545.40px;top:338px;font-size:12px;line-height:12px;transform:scaleX(0.9296);">CPU Usage</span>
<span class="t" style="left:683.10px;top:349px;font-size:12px;line-height:12px;transform:scaleX(0.7638);color:#000080;">2%</span>
<span class="t" style="left:547.90px;top:362px;font-size:12px;line-height:12px;transform:scaleX(0.9168);color:#000080;">0 - 20% (2% avg)</span>
<span class="t" style="left:594.20px;top:377px;font-size:12px;line-height:12px;transform:scaleX(0.9421);">Show graph</span>
<span class="t" style="left:546.10px;top:396px;font-size:12px;line-height:12px;transform:scaleX(0.9309);">Progress</span>
<span class="t" style="left:547.20px;top:409px;font-size:12px;line-height:12px;transform:scaleX(0.9323);">Position:</span>
<span class="t" style="left:547.20px;top:424px;font-size:12px;line-height:12px;transform:scaleX(0.8908);">Elapsed:</span>
<span class="t" style="left:618.10px;top:409px;font-size:12px;line-height:12px;transform:scaleX(0.9599);color:#000080;">4476 MB</span>
<span class="t" style="left:618.10px;top:424px;font-size:12px;line-height:12px;transform:scaleX(0.8741);color:#000080;">5:45</span>
<span class="t" style="left:23.30px;top:385px;font-size:12px;line-height:12px;transform:scaleX(0.8917);">[17:31:36] </span>
<span class="t" style="left:80.70px;top:385px;font-size:12px;line-height:12px;transform:scaleX(0.9306);">Elapsed Time:  5:29</span>
<span class="t" style="left:23.30px;top:398px;font-size:12px;line-height:12px;transform:scaleX(0.8917);">[17:51:02] </span>
<span class="t" style="left:80.70px;top:398px;font-size:12px;line-height:12px;transform:scaleX(0.9731);">Creating Data Disc</span>
<span class="t" style="left:23.30px;top:411px;font-size:12px;line-height:12px;transform:scaleX(0.8917);">[17:56:47] </span>
<span class="t" style="left:80.70px;top:411px;font-size:12px;line-height:12px;transform:scaleX(0.9567);">Speed:6-16 X CAV (11.73 X average)</span>
<span class="t" style="left:23.30px;top:424px;font-size:12px;line-height:12px;transform:scaleX(0.8917);">[17:56:47] </span>
<span class="t" style="left:80.70px;top:424px;font-size:12px;line-height:12px;transform:scaleX(0.9306);">Elapsed Time:  5:45</span>
</div>
</body>
</html>
